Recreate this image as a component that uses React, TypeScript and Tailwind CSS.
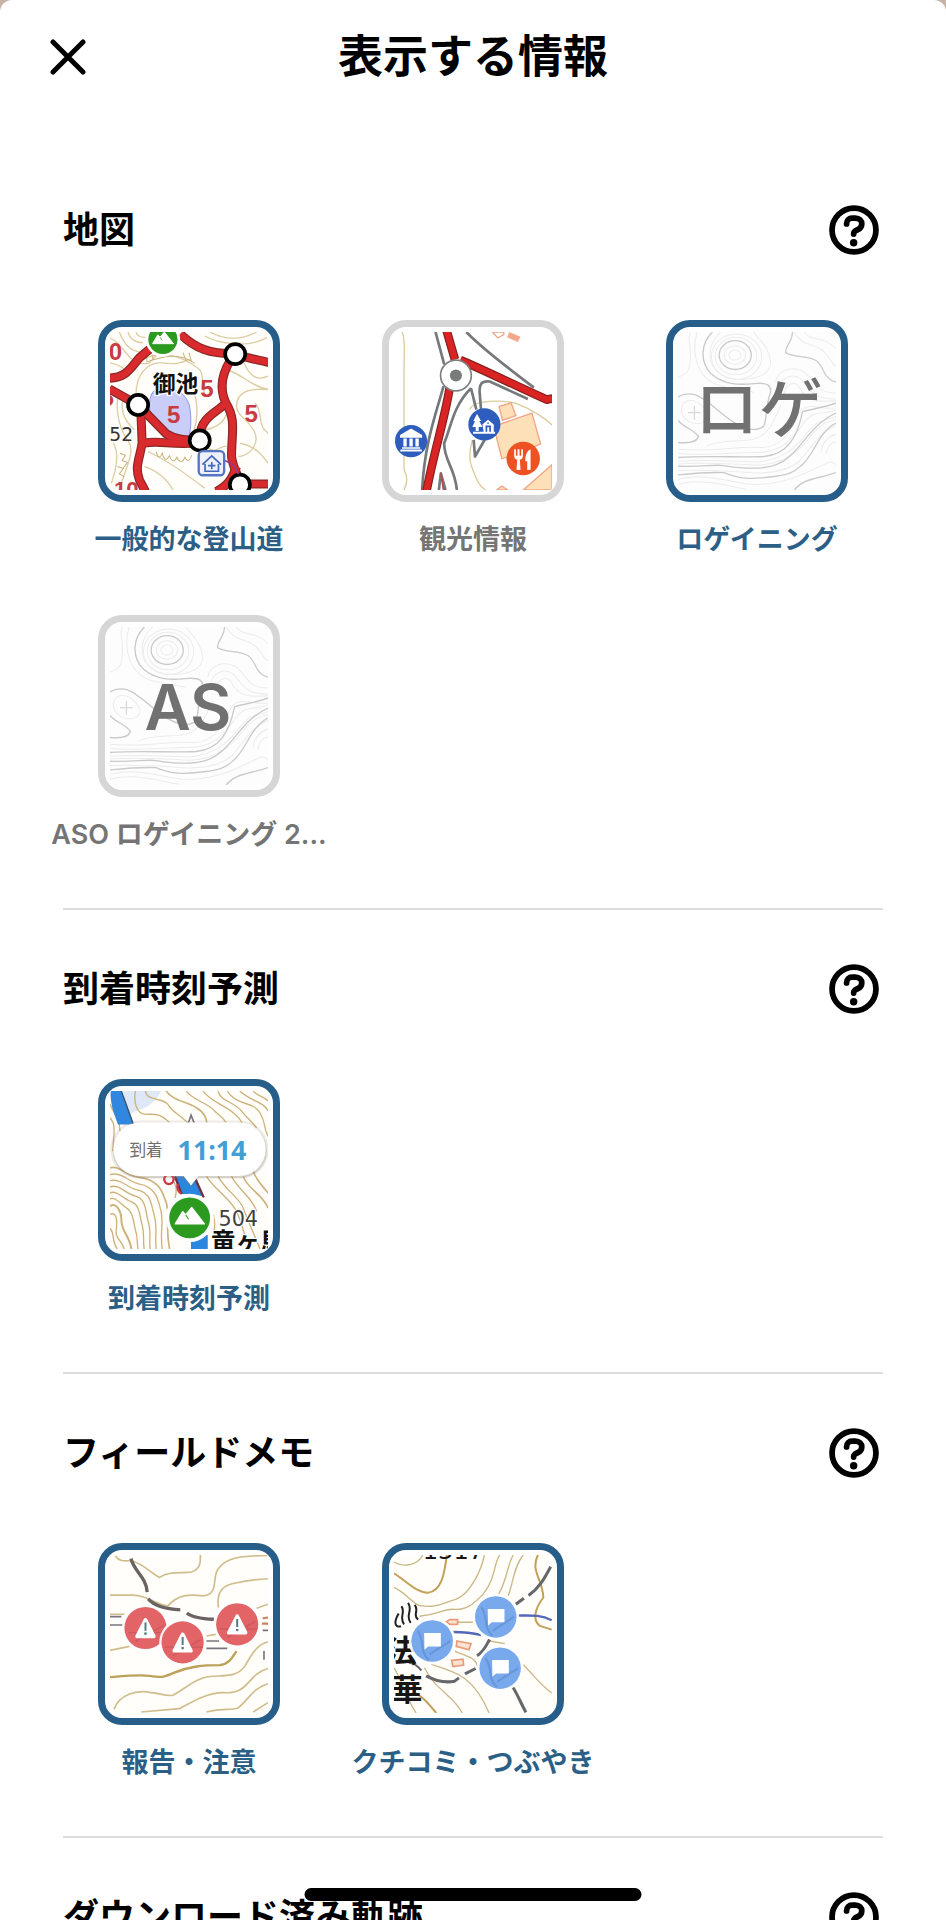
import { useState } from "react";
import type { ReactNode } from "react";

type Layer = {
    id: string;
    label: string;
    initial: boolean;
    art: ReactNode;
};

type LayerSection = {
    title: string;
    layers: Layer[];
};

const MAP_FONT = "font-['Inter','Noto_Sans_CJK_JP',sans-serif]";

/* Green summit badge */
function PeakBadge({ x, y, r }: { x: number; y: number; r: number }) {
    return (
        <g transform={`translate(${x} ${y}) scale(${r / 60})`}>
            <circle r="72" fill="#fff" />
            <circle r="61" fill="#2c9a1e" />
            <path d="M-43 18 L-21 -19 L-12 -9 L6 -31 L44 18 Z" fill="#fff" stroke="#fff" strokeWidth="4" strokeLinejoin="round" />
            <path d="M-12 -9 L-3 4" stroke="#2c9a1e" strokeWidth="3" />
        </g>
    );
}

function TrailMap() {
    return (
        <svg viewBox="62 68 472 472" className={`h-full w-full ${MAP_FONT}`} aria-hidden="true">
            <rect x="62" y="68" width="472" height="472" fill="#fffefa" />
            <g fill="none" stroke="#ddcda4" strokeWidth="4">
                <path d="M62 86 C100 100 110 150 150 160 S180 150 200 140" />
                <path d="M90 68 C105 110 130 130 165 128" />
                <path d="M116 68 C120 90 140 100 160 100" />
                <path d="M140 68 C142 80 150 84 168 84" />
                <path d="M62 160 C95 165 110 180 120 200" />
                <path d="M160 150 C200 130 250 130 300 160 S330 180 345 260" />
                <path d="M140 250 C140 200 170 160 210 160 S250 170 300 150" />
                <path d="M345 80 C380 100 470 120 530 85" />
                <path d="M360 68 C400 90 450 95 500 68" />
                <path d="M462 160 C480 200 500 215 534 200" />
                <path d="M410 180 C450 190 500 240 534 238" />
                <path d="M534 240 C470 235 440 250 440 290 C440 320 480 330 495 370 C510 410 470 440 445 440" />
                <path d="M495 280 C520 300 500 350 534 370" />
                <path d="M450 400 C500 410 520 440 534 460" />
                <path d="M105 260 C90 290 100 330 135 360" />
                <path d="M88 245 C75 300 90 360 120 400 C135 430 110 470 90 540" />
                <path d="M72 400 C90 430 80 480 66 520" />
                <path d="M165 470 C200 480 235 510 250 540" />
                <path d="M175 425 C230 450 300 500 345 535" />
                <path d="M300 220 C330 270 325 330 310 370" />
                <path d="M350 360 C390 350 410 330 412 300" />
                <path d="M350 410 C380 440 395 400 412 410" />
            </g>
            <g fill="none" stroke="#c9b27a" strokeWidth="3">
                <path d="M172 130 V155 M190 135 V152 M280 130 L290 155 M298 130 L306 158 M170 158 C220 140 270 128 315 162" />
                <path d="M200 425 q8 30 18 5 q8 32 22 8 q10 28 22 4 q12 26 24 0 q10 22 20 -6" />
                <path d="M92 430 l16 6 l-10 16 l16 6 l-12 16 M84 470 l18 6 l-12 16 l14 8 M108 270 l18 8 l-16 14 l16 8" />
            </g>

            <path d="M200 240 C240 232 285 238 300 290 C306 330 305 360 296 386 C255 378 205 350 180 300 C178 270 184 248 200 240 Z" fill="#c9cdf8" stroke="#8f9be0" strokeWidth="3" />

            <g fill="#c93a42" fontSize="72" fontWeight="700" className="font-['Liberation_Sans',sans-serif]">
                <text x="58" y="153">0</text>
                <text x="34" y="290">5</text>
                <text x="332" y="263">5</text>
                <text x="232" y="340">5</text>
                <text x="464" y="336">5</text>
                <text x="74" y="562" fontSize="66">10</text>
            </g>

            {/* Trails */}
            <g fill="none" strokeLinejoin="round">
                <g stroke="#8b2624" strokeWidth="27">
                    <path d="M56 206 C110 205 120 180 150 145 L182 118" />
                    <path d="M272 74 C320 120 360 132 434 134 C480 148 510 152 540 160" />
                    <path d="M60 238 L146 286 L230 372 C260 392 300 390 330 392" />
                    <path d="M165 400 C210 390 250 408 330 398" />
                    <path d="M154 300 L158 400 C150 450 135 470 150 510 L168 545" />
                    <path d="M434 134 C400 180 385 230 408 280 C440 330 425 370 425 440 C430 480 450 500 450 525" />
                    <path d="M330 380 C335 320 380 310 408 280" />
                    <path d="M440 470 C425 510 415 525 380 545" />
                    <path d="M450 522 H540" />
                </g>
                <g stroke="#d92b2d" strokeWidth="20">
                    <path d="M56 206 C110 205 120 180 150 145 L182 118" />
                    <path d="M272 74 C320 120 360 132 434 134 C480 148 510 152 540 160" />
                    <path d="M60 238 L146 286 L230 372 C260 392 300 390 330 392" />
                    <path d="M165 400 C210 390 250 408 330 398" />
                    <path d="M154 300 L158 400 C150 450 135 470 150 510 L168 545" />
                    <path d="M434 134 C400 180 385 230 408 280 C440 330 425 370 425 440 C430 480 450 500 450 525" />
                    <path d="M330 380 C335 320 380 310 408 280" />
                    <path d="M440 470 C425 510 415 525 380 545" />
                    <path d="M450 522 H540" />
                </g>
            </g>
            <g fill="#fff" stroke="#000" strokeWidth="11">
                <circle cx="436" cy="134" r="30" />
                <circle cx="146" cy="286" r="30" />
                <circle cx="330" cy="392" r="30" />
                <circle cx="450" cy="524" r="30" />
            </g>
            <PeakBadge x={220} y={90} r={43} />

            {/* Mountain hut */}
            <path d="M404 452 C430 460 440 475 445 492" fill="none" stroke="#8c3a8a" strokeWidth="5" />
            <rect x="327" y="424" width="76" height="72" rx="12" fill="#eef1fc" stroke="#5476c4" strokeWidth="7" />
            <path d="M338 464 L366 438 L394 464 M346 462 V484 H386 V462 M366 456 V478 M355 467 H377" fill="none" stroke="#4268bd" strokeWidth="5" />

            <text x="190" y="247" fontSize="68" fontWeight="700" fill="#111" stroke="#fff" strokeWidth="8" paintOrder="stroke">御池</text>
            <text x="60" y="394" fontSize="56" fill="#333" className="font-['DejaVu_Sans',sans-serif]">52</text>
        </svg>
    );
}

function SightseeingMap() {
    return (
        <svg viewBox="74 68 472 472" className="h-full w-full" aria-hidden="true">
            <rect x="74" y="68" width="472" height="472" fill="#fff" />
            <g fill="none" stroke="#dccb9c" strokeWidth="4">
                <path d="M98 68 C108 90 104 120 104 200 V480 C116 500 114 520 104 540" />
                <path d="M300 300 C310 270 400 270 440 282 C490 300 530 330 546 346" />
                <path d="M308 390 C300 420 298 450 306 470 C320 510 330 530 348 540" />
            </g>
            <g fill="#fde0b8" stroke="#f0a585" strokeWidth="4">
                <path d="M388 290 L424 280 L438 318 L398 332 Z" />
                <path d="M372 350 L486 310 L512 402 L440 436 L396 446 Z" />
                <path d="M460 540 L546 464 V540 Z" />
                <path d="M380 540 L396 528 L414 540 Z" />
                <path d="M368 68 L384 86 L402 76 V68 Z" fill="#fff" />
                <path d="M418 68 L452 82 L444 98 L412 84 Z" fill="#f5a98a" stroke="none" />
            </g>

            {/* Side roads */}
            <g fill="none" stroke="#75797b" strokeWidth="8" strokeLinejoin="round">
                <path d="M198 68 L224 165" />
                <path d="M290 68 C340 120 420 180 492 234" />
                <path d="M474 268 L360 216 C335 212 328 225 330 250 L334 300" />
                <path d="M222 230 C200 310 165 400 158 540" />
                <path d="M304 236 C250 290 245 350 224 400 C222 450 255 470 262 540" />
                <path d="M304 236 L320 300 M312 390 L316 440 L345 390" />
                <path d="M208 540 L214 490 L228 540" />
            </g>
            <path d="M214 490 L222 540" stroke="#c2434a" strokeWidth="5" />

            {/* Main roads */}
            <g fill="none" strokeLinejoin="round">
                <g stroke="#85201f" strokeWidth="26">
                    <path d="M230 60 L256 150" />
                    <path d="M272 152 C340 180 440 230 530 270 L552 266" />
                    <path d="M240 236 C225 330 195 420 170 548" />
                </g>
                <g stroke="#da2424" strokeWidth="19">
                    <path d="M230 60 L256 150" />
                    <path d="M272 152 C340 180 440 230 530 270 L552 266" />
                    <path d="M240 236 C225 330 195 420 170 548" />
                </g>
            </g>
            <circle cx="259" cy="198" r="46" fill="#fff" stroke="#7d7f80" strokeWidth="5" />
            <circle cx="259" cy="198" r="18" fill="#797b7b" />

            {/* Museum */}
            <circle cx="125" cy="394" r="48" fill="#2f5dbd" />
            <path d="M92 376 L125 356 L158 376 V384 H92 Z M102 386 H112 V410 H102 Z M120 386 H130 V410 H120 Z M138 386 H148 V410 H138 Z M98 412 H152 V417 H98 Z M93 419 H157 V425 H93 Z" fill="#fff" />

            {/* Park */}
            <circle cx="344" cy="344" r="48" fill="#2f5dbd" />
            <path d="M322 312 L334 334 H329 L338 352 H327 V364 H318 V352 H308 L316 334 H311 Z M338 344 L355 330 L372 344 V366 H376 V372 H310 V366 H342 Z" fill="#fff" />
            <path d="M350 366 V350 H361 V366 M355 338 V342" fill="none" stroke="#2f5dbd" strokeWidth="5" />

            {/* Restaurant */}
            <circle cx="460" cy="446" r="50" fill="#ee5223" />
            <path d="M433 418 V438 Q433 448 442 450 L440 480 H452 L450 450 Q459 448 459 438 V418 H454 V438 H449 V418 H443 V438 H438 V418 Z M482 418 Q466 424 466 454 H472 V480 H482 Z" fill="#fff" />
        </svg>
    );
}

/* Pale contour map with the first letters of the map's name on it */
function InitialsMap({ initials }: { initials: string }) {
    const latin = /^[A-Z]+$/.test(initials);
    return (
        <svg viewBox="213 80 472 472" className={`h-full w-full ${MAP_FONT}`} aria-hidden="true">
            <rect x="213" y="80" width="472" height="472" fill="#fdfdfd" />
            <g fill="none" stroke="#ececec" strokeWidth="3">
                <ellipse cx="383" cy="149" rx="32" ry="28" />
                <ellipse cx="383" cy="149" rx="18" ry="15" />
                <ellipse cx="386" cy="152" rx="62" ry="56" />
                <ellipse cx="388" cy="154" rx="75" ry="68" />
                <path d="M340 80 C290 130 300 200 370 218 C430 230 490 210 490 170 C485 120 450 100 440 80" />
                <path d="M270 80 C255 130 265 190 300 220 S400 250 440 260" />
                <path d="M213 215 C240 205 250 200 250 150 S240 100 250 80" />
                <path d="M505 230 C510 190 560 180 590 200 C630 230 620 262 685 262" />
                <path d="M515 245 C525 210 560 205 580 220 C610 250 610 280 685 280" />
                <path d="M530 270 C530 235 560 228 572 240 C590 270 600 295 685 285" />
                <path d="M560 80 C590 130 620 110 650 140 S670 180 685 180" />
                <path d="M590 80 C610 110 650 90 685 130" />
                <path d="M213 430 C300 440 400 420 450 425 C520 430 550 380 570 330 S640 315 685 307" />
                <path d="M213 443 C300 450 400 438 450 440 C530 440 560 390 590 350 S650 330 685 312" />
                <path d="M213 466 C310 460 400 468 450 468 C530 462 570 420 600 380 S650 345 685 332" />
                <path d="M213 474 C310 468 400 476 450 478 C540 474 580 430 610 390 S660 352 685 340" />
                <path d="M213 494 C300 490 360 495 420 500 C500 505 560 490 590 450 S640 380 685 360" />
                <path d="M213 520 C290 500 350 525 430 535 C520 540 600 500 640 480 S670 470 685 475" />
                <path d="M213 535 C290 515 360 540 420 550" />
                <path d="M640 440 C645 400 670 390 685 385 M655 445 C660 420 670 410 685 408" />
                <path d="M225 300 C240 275 275 280 300 320 C310 350 280 360 250 350 C230 340 218 320 225 300 Z" />
                <path d="M300 420 C340 400 400 410 440 400 C490 385 500 340 520 300" />
            </g>
            <g fill="none" stroke="#cacaca" strokeWidth="4">
                <ellipse cx="384" cy="149" rx="48" ry="43" />
                <path d="M316 80 C280 115 278 170 312 205 C350 240 400 238 440 234 C480 230 495 240 488 265 C475 300 478 340 470 360 C450 380 410 370 380 350 C340 325 300 280 265 268 C245 262 225 266 213 274" />
                <path d="M213 344 C230 365 262 372 274 392 C268 412 240 412 213 410" />
                <path d="M555 80 C555 110 530 125 535 142 C550 155 600 150 625 165 C650 180 645 220 685 230" />
                <path d="M213 455 C300 448 400 456 470 452 C540 445 570 395 585 318 C620 308 655 305 685 292" />
                <path d="M213 481 C280 484 320 475 350 479 C420 490 480 488 510 475 C580 445 600 360 685 322" />
                <path d="M213 507 C260 502 300 498 350 500 C400 520 430 520 480 514 C540 508 560 500 580 480 C620 450 630 380 685 352" />
                <path d="M560 552 C590 515 630 520 685 500" />
                <path d="M262 300 V342 M243 321 H281" stroke="#dadada" />
            </g>
            <text
                x={latin ? 446 : 454}
                y={latin ? 387 : 380}
                textAnchor="middle"
                fontSize={latin ? 190 : 192}
                fontWeight={latin ? 600 : 500}
                fill="#717171"
            >
                {initials}
            </text>
        </svg>
    );
}

function ArrivalMap() {
    return (
        <svg viewBox="62 80 472 472" className={`h-full w-full ${MAP_FONT}`} aria-hidden="true">
            <rect x="62" y="80" width="472" height="472" fill="#fffefb" />
            <path d="M100 80 H215 C200 110 175 130 140 140 L120 150 Z" fill="#dfe8f6" />
            <g fill="none" stroke="#cdb27c" strokeWidth="4">
                <path d="M138 80 C132 110 140 150 170 150 C200 148 215 150 240 175" />
                <path d="M168 80 C170 110 220 100 235 120 C250 145 270 150 300 180" />
                <path d="M230 80 C250 110 290 110 320 130 C345 145 350 160 352 180" strokeWidth="5" />
                <path d="M290 80 C310 110 350 110 380 145 C400 160 410 170 412 185" />
                <path d="M340 80 C360 110 400 120 430 145 S450 170 460 180" />
                <path d="M385 80 C390 110 430 110 455 140 S480 165 500 190" />
                <path d="M412 80 C440 125 490 110 510 145 S520 190 534 215" />
                <path d="M450 80 C480 110 520 110 534 140 M490 80 C500 95 520 95 534 110" />
                <path d="M62 160 C80 180 74 200 70 260 M62 120 C75 150 90 160 92 200" />
                <path d="M350 335 C380 380 420 400 440 440 S460 510 480 552" />
                <path d="M385 335 C410 380 450 400 460 430 S490 500 510 552" />
                <path d="M425 335 C440 370 490 400 500 440" />
                <path d="M460 335 C470 370 520 390 534 430 M490 320 C500 350 520 365 534 385" strokeWidth="5" />
                <path d="M340 410 C370 430 380 470 372 500" />
                <path d="M62 310 C90 300 110 335 150 338 C200 345 215 370 225 400 C245 440 225 480 240 552" strokeWidth="5" />
                <path d="M62 330 C95 320 115 350 150 358 C195 365 205 400 212 430 C225 470 210 500 218 552" />
                <path d="M62 348 C95 340 110 368 145 376 C185 385 185 420 194 450 C205 490 195 510 200 552" />
                <path d="M62 366 C90 358 105 385 138 394 C170 402 168 440 176 470 C186 500 178 520 182 552" />
                <path d="M62 384 C85 376 100 402 128 412 C152 422 150 455 158 480 C166 510 160 530 164 552" />
                <path d="M62 402 C80 395 95 420 112 430 C130 440 132 470 138 495 C146 520 142 540 146 552" />
                <path d="M62 424 C80 410 96 440 96 465 C96 500 120 510 126 552" strokeWidth="6" />
                <path d="M62 448 C84 440 84 470 80 500 C78 520 100 530 104 552 M62 490 C76 500 66 530 84 552" />
                <path d="M248 345 C262 360 262 380 256 400" />
            </g>

            {/* Route */}
            <path d="M64 80 H96 L132 180 H86 C70 140 62 110 64 80 Z" fill="#3187df" />
            <path d="M96 80 L132 180" stroke="#31506e" strokeWidth="4" />
            <path d="M256 335 L318 335 L340 394 L276 388 Z" fill="#2b86e0" />
            <path d="M256 335 L276 388 M318 345 L342 398" stroke="#6d3144" strokeWidth="7" />
            <path d="M304 510 H354 V552 H304 Z" fill="#2b86e0" />
            <circle cx="238" cy="344" r="14" fill="#fff" stroke="#cf3440" strokeWidth="7" />
            <path d="M264 358 Q260 376 274 386" fill="none" stroke="#cf3440" strokeWidth="7" />
            <path d="M294 182 L304 152 L316 182" fill="none" stroke="#777" strokeWidth="5" />

            {/* Arrival balloon */}
            <path d="M150 168 H449 A86 86 0 0 1 449 342 H326 L304 368 L282 342 H150 A86 86 0 0 1 150 168 Z" fill="#8a8070" opacity="0.15" />
            <path d="M152 176 H449 A82 82 0 0 1 449 340 H326 L304 366 L282 340 H152 A82 82 0 0 1 152 176 Z" fill="#8a8070" opacity="0.25" />
            <path d="M152 174 H447 A80 80 0 0 1 447 334 H326 L304 362 L282 334 H152 A80 80 0 0 1 152 174 Z" fill="#fff" />
            <text x="120" y="275" fontSize="50" fill="#6f6f6f">到着</text>
            <text x="264" y="286" fontSize="80" fontWeight="700" fill="#419fd6" className="font-['Noto_Sans',sans-serif]">11:14</text>

            <PeakBadge x={300} y={459} r={60} />
            <text x="386" y="484" fontSize="62" fill="#3f3f3f" stroke="#fff" strokeWidth="6" paintOrder="stroke" className="font-['DejaVu_Sans',sans-serif]">504</text>
            <text x="364" y="555" fontSize="73" fontWeight="700" fill="#111" stroke="#fff" strokeWidth="6" paintOrder="stroke">竜ヶ馬</text>
        </svg>
    );
}

function WarningPin({ x, y }: { x: number; y: number }) {
    return (
        <g transform={`translate(${x} ${y})`}>
            <circle r="70" fill="#fff" opacity="0.9" />
            <circle r="63" fill="#e26467" />
            <path d="M-52 14 L60 14 M-30 40 L54 -8" stroke="#b84d55" strokeWidth="4" opacity="0.5" />
            <path d="M0 -24 L25 25 H-25 Z" fill="#fff" stroke="#fff" strokeWidth="11" strokeLinejoin="round" />
            <path d="M0 -16 V8" stroke="#557d7d" strokeWidth="6" />
            <circle cy="17" r="4" fill="#557d7d" />
        </g>
    );
}

function ReportMap() {
    return (
        <svg viewBox="62 63 472 472" className="h-full w-full" aria-hidden="true">
            <rect x="62" y="63" width="472" height="472" fill="#fffefb" />
            <g fill="none" stroke="#cfbd8b" strokeWidth="5">
                <path d="M78 66 C90 85 110 80 125 80 C165 90 180 115 210 130 C240 110 270 118 305 114 C335 105 332 80 332 63" />
                <path d="M62 183 H130 C180 185 195 210 235 215 C265 180 300 180 340 185 C390 180 365 130 385 105 C410 70 450 66 534 64" />
                <path d="M386 220 C380 180 395 155 430 148 C470 140 500 135 534 134" />
                <path d="M62 240 H105 M500 222 L534 210 M62 348 L120 336 M350 305 L378 300" />
                <path d="M74 524 C90 480 140 465 185 474 C210 476 230 486 250 482 C290 460 320 430 360 426 C400 422 440 430 465 395 C490 350 505 330 534 322" />
                <path d="M155 532 L270 522 C310 500 350 475 400 474 C480 480 470 420 534 402" />
                <path d="M350 532 C400 520 420 528 445 520 C480 490 490 460 534 448 M490 532 L534 504" />
            </g>
            <path d="M62 428 C110 424 150 420 180 424 C220 430 220 428 250 416 C300 395 340 392 390 392 C420 388 430 365 440 350" fill="none" stroke="#bda158" strokeWidth="7" />
            <path d="M62 247 H96 M62 272 H100 M350 320 H388 M350 342 H412 M518 288 H534 M522 350 V376" stroke="#77757c" strokeWidth="5" />
            <path d="M518 252 L534 250 M516 268 H534" stroke="#c28360" strokeWidth="6" />
            <g fill="none" stroke="#6a6361" strokeWidth="10">
                <path d="M125 74 C132 110 172 130 173 174" />
                <path d="M176 194 C190 210 220 224 272 227" />
                <path d="M292 236 C310 252 350 254 372 255" />
            </g>
            <WarningPin x={168} y={281} />
            <WarningPin x={442} y={270} />
            <WarningPin x={279} y={324} />
        </svg>
    );
}

function CommentPin({ x, y }: { x: number; y: number }) {
    return (
        <g transform={`translate(${x} ${y})`}>
            <circle r="70" fill="#fff" opacity="0.9" />
            <circle r="62" fill="#78a9ec" />
            <path d="M-44 -30 C-20 0 -40 30 -10 56 M-8 40 L54 0" fill="none" stroke="#5582c6" strokeWidth="6" opacity="0.5" />
            <path d="M-24 -24 H26 V16 H-12 L-23 26 Z" fill="#fff" />
        </g>
    );
}

function CommentMap() {
    return (
        <svg viewBox="164 63 472 472" className={`h-full w-full ${MAP_FONT}`} aria-hidden="true">
            <rect x="164" y="63" width="472" height="472" fill="#fffefb" />
            <g fill="none" stroke="#cbb886" strokeWidth="4">
                <path d="M164 84 C190 100 235 95 250 63" />
                <path d="M164 160 C200 175 225 215 245 215 C290 220 300 210 350 195 C390 180 425 110 434 63" />
                <path d="M240 246 C300 240 310 225 340 225 C385 230 410 200 430 180 C470 130 460 90 480 63" />
                <path d="M520 63 C500 100 500 150 470 190 M550 63 C520 100 520 150 505 185" />
                <path d="M345 264 H400 M346 350 C390 370 410 370 415 400 M450 320 L495 328" />
                <path d="M550 390 C580 420 600 450 635 475" />
                <path d="M275 390 C340 410 400 420 448 535" />
                <path d="M164 400 C190 440 200 490 230 535 M255 400 C290 470 340 480 368 535" />
            </g>
            <g fill="none" stroke="#c3a057" strokeWidth="6">
                <path d="M164 118 C200 140 230 175 265 176 C310 170 315 110 322 63" />
                <path d="M594 63 C570 110 610 140 610 190 C580 230 580 260 600 275 L635 286" />
                <path d="M235 480 C255 490 270 510 290 535" />
            </g>
            <g fill="none" stroke="#5468b8" strokeWidth="7">
                <path d="M340 293 C370 293 400 296 424 302" />
                <path d="M528 244 C570 244 600 240 635 258" />
            </g>
            <g fill="#fbe2d3" stroke="#e99b78" strokeWidth="5">
                <path d="M330 256 H354 V270 H330 L320 263 Z" />
                <path d="M352 320 L394 328 L388 346 L350 336 Z" />
                <path d="M336 378 L370 374 L372 392 L340 396 Z" />
            </g>
            <g fill="none" stroke="#66676a" strokeWidth="9">
                <path d="M528 210 L552 192 M566 184 C600 160 615 130 632 98" />
                <path d="M260 424 C290 440 320 445 345 440 L358 430 M376 418 L408 402 M412 364 C435 350 440 330 450 315" />
                <path d="M490 430 C520 445 530 480 558 533" />
                <path d="M208 385 C220 385 235 395 246 408" strokeWidth="6" />
            </g>

            {/* Hot spring mark and vertical place name */}
            <g fill="none" stroke="#222" strokeWidth="6">
                <path d="M178 238 C164 262 164 280 185 276 M186 216 C200 232 178 250 194 270 M206 206 C222 228 196 244 214 266 M226 212 C240 230 218 244 236 256" />
            </g>
            <g fill="#161616" fontSize="92" fontWeight="700">
                <text x="140" y="384">法</text>
                <text x="158" y="498">華</text>
                <text x="250" y="76" fontSize="72" fontWeight="400" className="font-['DejaVu_Sans',sans-serif]">1317</text>
            </g>

            <CommentPin x={278} y={320} />
            <CommentPin x={468} y={248} />
            <CommentPin x={481} y={401} />
        </svg>
    );
}

const SECTIONS: LayerSection[] = [
    {
        title: "地図",
        layers: [
            { id: "trail", label: "一般的な登山道", initial: true, art: <TrailMap /> },
            { id: "sightseeing", label: "観光情報", initial: false, art: <SightseeingMap /> },
            { id: "rogaining", label: "ロゲイニング", initial: true, art: <InitialsMap initials="ロゲ" /> },
            { id: "aso", label: "ASO ロゲイニング 2...", initial: false, art: <InitialsMap initials="AS" /> },
        ],
    },
    {
        title: "到着時刻予測",
        layers: [{ id: "arrival", label: "到着時刻予測", initial: true, art: <ArrivalMap /> }],
    },
    {
        title: "フィールドメモ",
        layers: [
            { id: "report", label: "報告・注意", initial: true, art: <ReportMap /> },
            { id: "comment", label: "クチコミ・つぶやき", initial: true, art: <CommentMap /> },
        ],
    },
    { title: "ダウンロード済み軌跡", layers: [] },
];

function HelpIcon() {
    return (
        <svg viewBox="0 0 148 148" className="h-full w-full" fill="none" stroke="#000" aria-hidden="true">
            <circle cx="74" cy="74" r="65" strokeWidth="17" />
            <path d="M52 56 C52 44 60 39 68 39 H78 C90 39 97 47 97 56 C97 66 90 71 83 74 C76 77 73 79 73 86" strokeWidth="17" strokeLinecap="round" />
            <circle cx="73" cy="112" r="11" fill="#000" stroke="none" />
        </svg>
    );
}

function LayerTile({ layer }: { layer: Layer }) {
    const [active, setActive] = useState(layer.initial);

    return (
        <button
            type="button"
            aria-pressed={active}
            onClick={() => setActive(!active)}
            className="flex flex-col items-center cursor-pointer"
        >
            <span
                className={`block w-[182px] h-[182px] rounded-3xl border-[7px] p-[5px] bg-white ${active ? "border-[#265e89]" : "border-[#d6d6d6]"}`}
            >
                <span className="block w-full h-full overflow-hidden rounded-xs">{layer.art}</span>
            </span>
            <span
                className={`mt-[18px] text-[27px] leading-10 font-semibold whitespace-nowrap ${active ? "text-[#2b5f86]" : "text-[#757575]"}`}
            >
                {layer.label}
            </span>
        </button>
    );
}

export default function App() {
    return (
        <div className="relative h-screen overflow-hidden bg-[#c8b4a6] font-['Inter','Noto_Sans_CJK_JP',sans-serif] text-black" lang="ja">
            <div className="flex h-full flex-col rounded-t-xl bg-white">

                {/* Sheet header */}
                <header className="grid grid-cols-[48px_1fr_48px] items-center px-11 pt-[25px] shrink-0">
                    <button type="button" aria-label="閉じる" className="flex h-16 w-12 items-center justify-center cursor-pointer">
                        <svg viewBox="0 0 36 36" className="h-9 w-9" fill="none" stroke="#000" strokeWidth="5" strokeLinecap="round" aria-hidden="true">
                            <path d="M3 3 L33 33 M33 3 L3 33" />
                        </svg>
                    </button>
                    <h1 className="text-center text-[45px] leading-16 font-bold">表示する情報</h1>
                </header>

                <main className="min-h-0 flex-1 overflow-y-auto pt-[62px] [scrollbar-width:none]">
                    {SECTIONS.map((section) => (
                        <section key={section.title} className="mx-[63px] border-b-2 border-[#dcdcdc] pt-[55px] pb-[53px]">
                            <div className="flex h-12 items-center justify-between pr-1">
                                <h2 className="text-[36px] leading-12 font-bold">{section.title}</h2>
                                <button type="button" aria-label={`${section.title}のヘルプ`} className="h-[50px] w-[50px] cursor-pointer">
                                    <HelpIcon />
                                </button>
                            </div>
                            {section.layers.length > 0 && (
                                <div className="-mx-4 mt-[66px] grid grid-cols-3 gap-y-[55px]">
                                    {section.layers.map((layer) => (
                                        <LayerTile key={layer.id} layer={layer} />
                                    ))}
                                </div>
                            )}
                        </section>
                    ))}
                </main>
            </div>

            {/* Home indicator */}
            <div className="absolute bottom-[19px] left-1/2 h-[13px] w-[337px] -translate-x-1/2 rounded-full bg-black" />
        </div>
    );
}
